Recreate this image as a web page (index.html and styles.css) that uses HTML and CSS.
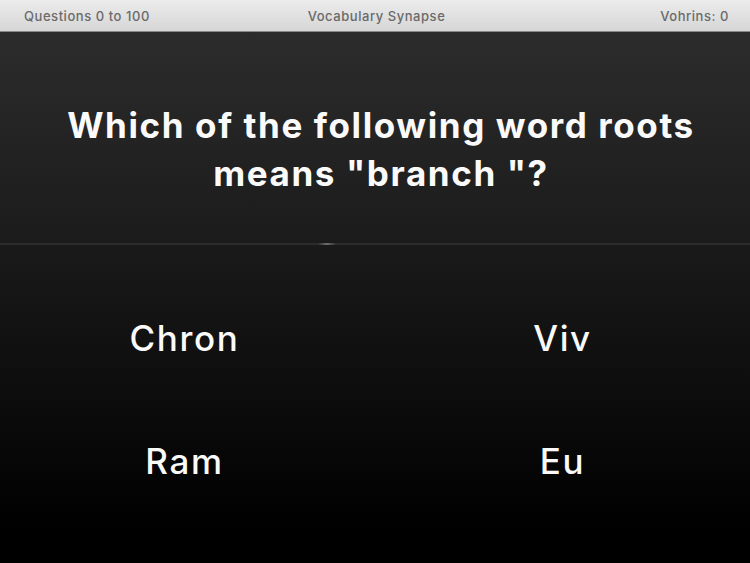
FILE: index.html
```html
<!DOCTYPE html>
<html>
<head>
<meta charset="utf-8">
<link rel="stylesheet" href="styles.css">
</head>
<body>
<div class="app">
  <header class="topbar">
    <span class="tb-left">Questions 0 to 100</span>
    <span class="tb-center">Vocabulary Synapse</span>
    <span class="tb-right">Vohrins: 0</span>
  </header>
  <section class="question">
    <h1>Which of the following word roots<br>means "branch "?</h1>
  </section>
  <div class="divider"><span class="glint"></span></div>
  <section class="answers">
    <div class="answer">Chron</div>
    <div class="answer">Viv</div>
    <div class="answer">Ram</div>
    <div class="answer">Eu</div>
  </section>
</div>
</body>
</html>
```
FILE: styles.css
```css
html, body {
  margin: 0;
  padding: 0;
  background: #000;
}
.app {
  width: 750px;
  height: 563px;
  display: flex;
  flex-direction: column;
  font-family: "Inter", "Liberation Sans", sans-serif;
  overflow: hidden;
}
.topbar {
  flex: 0 0 32px;
  height: 32px;
  display: grid;
  grid-template-columns: 1fr 1fr 1fr;
  align-items: center;
  padding: 0 21px 0 24px;
  background: linear-gradient(#ececec, #d6d6d6);
  border-bottom: 1px solid #8a8a8a;
  color: #6a6a6a;
  font-size: 13px;
  font-weight: 500;
  letter-spacing: 0.55px;
  box-sizing: border-box;
}
.tb-left { text-align: left; }
.tb-center { text-align: center; }
.tb-right { text-align: right; }
.question {
  flex: 0 0 211px;
  height: 211px;
  box-sizing: border-box;
  background: linear-gradient(#2c2c2c, #1b1b1b);
  display: flex;
  align-items: center;
  justify-content: center;
  padding: 22px 0 0 12px;
}
.question h1 {
  margin: 0;
  color: #fafafa;
  font-size: 35px;
  line-height: 48px;
  font-weight: 700;
  text-align: center;
  letter-spacing: 1.6px;
}
.divider {
  flex: 0 0 2px;
  height: 2px;
  background: #2b2b2b;
  display: flex;
  padding-left: 318px;
}
.glint {
  width: 18px;
  height: 2px;
  background: linear-gradient(90deg, rgba(90,90,90,0), #707070, rgba(90,90,90,0));
}
.answers {
  flex: 1;
  background: linear-gradient(#1a1a1a, #000 90%);
  display: grid;
  grid-template-columns: 1fr 1fr;
  grid-template-rows: 123px 123px;
  padding-top: 31px;
  box-sizing: border-box;
}
.answer {
  display: flex;
  align-items: center;
  justify-content: center;
  color: #fafafa;
  font-size: 35px;
  font-weight: 500;
  letter-spacing: 1.6px;
}
.answer:nth-child(odd) {
  padding-right: 6px;
}
```
